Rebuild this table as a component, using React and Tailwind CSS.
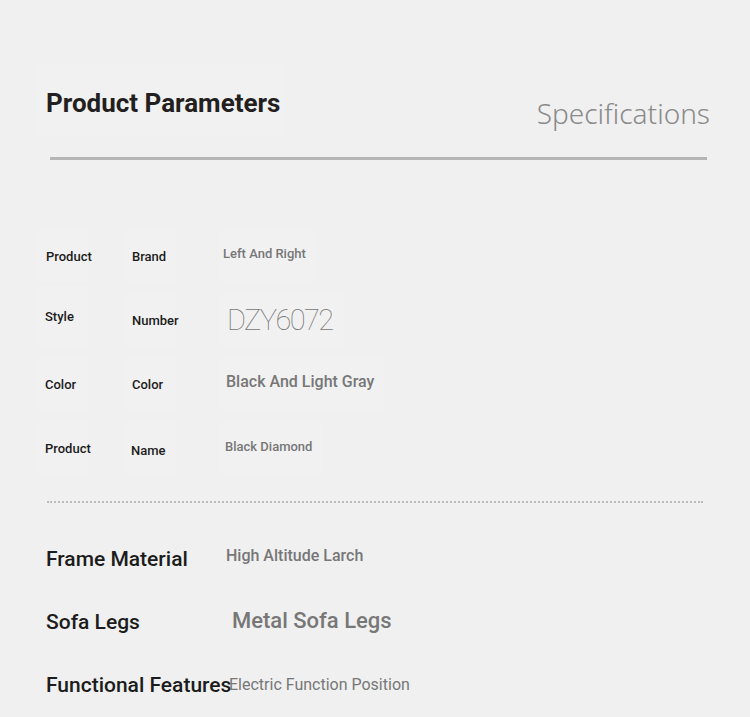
const ROWS = [
  { a: 'Product', b: 'Brand', v: 'Left And Right', aPad: 'pl-[9px] pt-[2px]', bPad: 'pl-[7px] pt-[2px]', vCls: 'pl-[5px] text-[13px] font-medium -mt-[4px]' },
  { a: 'Style', b: 'Number', v: 'DZY6072', aPad: 'pl-[8px] -mt-[1px]', bPad: 'pl-[7px] pt-[2px]', vCls: 'pl-[9px] text-[29px] font-thin tracking-[-1.6px] mt-[2px]' },
  { a: 'Color', b: 'Color', v: 'Black And Light Gray', aPad: 'pl-[8px] pt-[2px]', bPad: 'pl-[7px] pt-[2px]', vCls: 'pl-[8px] text-[16px] font-medium -mt-[5px]' },
  { a: 'Product', b: 'Name', v: 'Black Diamond', aPad: 'pl-[8px] pt-[2px]', bPad: 'pl-[6px] pt-[6px]', vCls: 'pl-[7px] text-[13px] font-medium -mt-[2px]' },
]

const SPECS = [
  { label: 'Frame Material', value: 'High Altitude Larch', h: 'h-[64px]', vCls: 'pl-[46px] text-[16px] font-medium -mt-[8px]' },
  { label: 'Sofa Legs', value: 'Metal Sofa Legs', h: 'h-[61px]', vCls: 'pl-[52px] text-[22px] font-medium -mt-[4px]' },
  { label: 'Functional Features', value: 'Electric Function Position', h: 'h-[65px]', vCls: 'pl-[49px] text-[16px] font-normal -mt-[2px]' },
]

export default function App() {
  return (
    <div className="w-full h-[717px] overflow-hidden bg-[#f0f0f0] font-['Roboto',sans-serif]">
      {/* Header */}
      <div className="flex justify-between pt-[65px]">
        <div className="ml-[36px] w-[247px] h-[70px] bg-[#f1f1f1] flex items-center pl-[10px] pt-[6px]">
          <h1 className="text-[26px] leading-[30px] font-bold text-[#231f20] whitespace-nowrap">Product Parameters</h1>
        </div>
        <div className="mr-[40px] mt-[30px] text-[28px] leading-[36px] font-light text-[#8a8a8a] font-['Noto_Sans',sans-serif]">
          Specifications
        </div>
      </div>
      <div className="ml-[50px] mr-[43px] mt-[22px] h-[3px] bg-[#b5b5b5]" />

      {/* Basic info */}
      <div className="mt-[64px]">
        {ROWS.map((r, i) => (
          <div key={i} className="flex h-[64px] items-stretch">
            <div className={`ml-[37px] w-[51px] my-[6px] bg-[#f1f1f1] flex items-center text-[13px] font-medium text-[#1c1c1c] ${r.aPad}`}>
              <span className="whitespace-nowrap">{r.a}</span>
            </div>
            <div className={`ml-[37px] w-[50px] my-[6px] bg-[#f1f1f1] flex items-center text-[13px] font-medium text-[#1c1c1c] ${r.bPad}`}>
              <span className="whitespace-nowrap">{r.b}</span>
            </div>
            <div className="ml-[43px] my-[6px] bg-[#f1f1f1] flex items-center pr-[10px]">
              <span className={`whitespace-nowrap text-[#777] ${r.vCls}`}>{r.v}</span>
            </div>
          </div>
        ))}
      </div>

      <div className="ml-[47px] w-[656px] mt-[21px] border-t-2 border-dotted border-[#bdbdbd]" />

      {/* Detailed specs */}
      <div className="mt-[25px]">
        {SPECS.map((s, i) => (
          <div key={i} className={`flex items-center ${s.h}`}>
            <div className="ml-[46px] w-[134px] shrink-0 whitespace-nowrap text-[21px] font-medium text-[#1c1c1c]">
              {s.label}
            </div>
            <div className={`whitespace-nowrap text-[#777] ${s.vCls}`}>{s.value}</div>
          </div>
        ))}
      </div>
    </div>
  )
}
